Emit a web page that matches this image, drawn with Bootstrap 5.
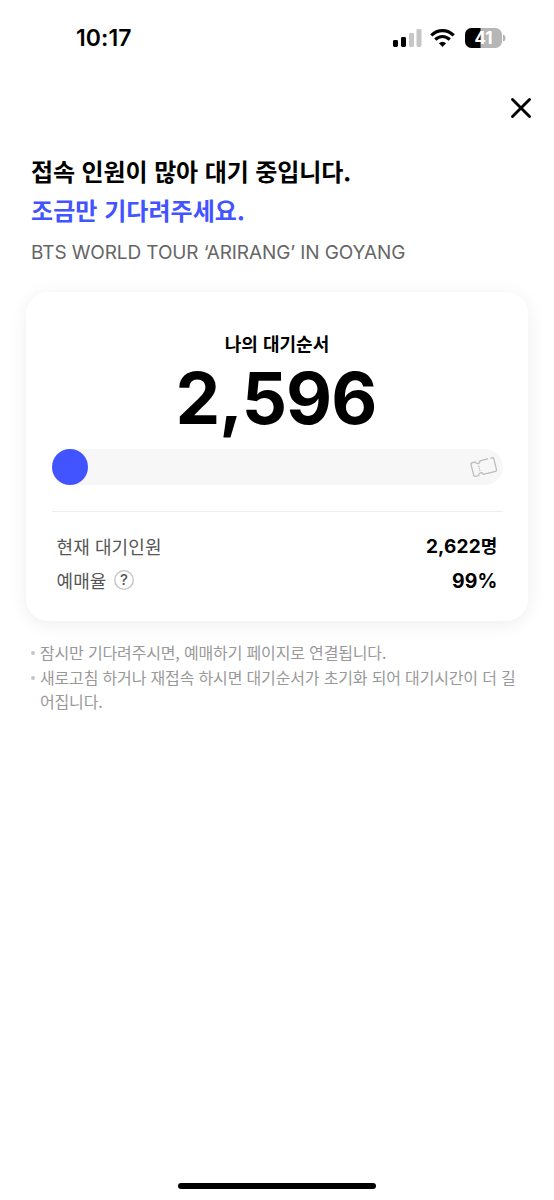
<!DOCTYPE html>
<html lang="ko">
<head>
<meta charset="utf-8">
<meta name="viewport" content="width=device-width, initial-scale=1">
<title>대기 중</title>
<link href="https://cdn.jsdelivr.net/npm/bootstrap@5.3.0/dist/css/bootstrap.min.css" rel="stylesheet">
<style>
body{font-family:Inter,"Noto Sans CJK KR",sans-serif;color:#000;background:#fff;overflow:hidden}
.screen{height:1200px}
.status{height:75px;padding:0 48px 0 76px}
.clock{font-size:23px;font-weight:600;line-height:30px;letter-spacing:.1px}
.topbar{height:66px;padding-right:22px}
.heading{padding:11px 0 0 31px;height:151px;white-space:nowrap}
.heading h1{font-size:24px;line-height:38.5px;font-weight:700;font-family:"Noto Sans CJK KR",sans-serif;letter-spacing:-.1px;margin:0}
.heading .accent{color:#4154ff;letter-spacing:.05px}
.event{font-size:19px;line-height:26px;letter-spacing:-.11px;color:#666;margin-top:11px}
.queue{margin:0 26px;height:329px;border:0;border-radius:22px;padding:0 25.5px;box-shadow:0 3px 18px rgba(0,0,0,.07)}
.queue-label{font:700 18px/26px "Noto Sans CJK KR",sans-serif;margin-top:38px}
.queue-number{font-size:71px;line-height:74px;font-weight:700;letter-spacing:-.9px;margin-top:5px;padding-right:2px}
.track{height:36px;border-radius:18px;background:#f7f7f7;margin-top:14px;padding-right:5px}
.runner{width:36px;height:36px;background:#4154ff}
.stats{border-top:1px solid #eee;margin-top:26px;padding:18px 5px 0}
.stat{height:34px;font-size:19px;line-height:34px}
.stat-name{color:#555;font:400 18px/32px "Noto Sans CJK KR",sans-serif;letter-spacing:.1px;height:32px}
.stat-value{font-weight:700;letter-spacing:.15px}
.stat-value.rate{font-size:19.5px}
.stat-value small{font-size:18px;font-weight:700}
.notes{margin:19px 0 0;padding:0 30px 0 40px;font:400 16px/24.5px "Noto Sans CJK KR",sans-serif;letter-spacing:-.16px;color:#999;white-space:nowrap}
.notes li{position:relative}
.notes li::before{content:"";position:absolute;left:-9px;top:11px;width:4px;height:4px;border-radius:50%;background:#c4c4c4}
.home{width:198px;height:6px;background:#000;margin-bottom:11px}
</style>
</head>
<body>
<main class="screen d-flex flex-column">
  <div class="status d-flex align-items-center justify-content-between">
    <span class="clock">10:17</span>
    <div class="d-flex align-items-center">
      <svg width="29" height="18" viewBox="0 0 29 18"><rect y="11" width="5" height="7" rx="1.4"/><rect x="8" y="8" width="5" height="10" rx="1.4"/><rect x="16" y="4" width="5" height="14" rx="1.4" fill="#c6c6c6"/><rect x="23.5" width="5" height="18" rx="1.4" fill="#c6c6c6"/></svg>
      <svg class="ms-2" style="margin-right:10px" width="25" height="18" viewBox="0 0 25 18"><g fill="none" stroke="#000" stroke-width="3.2"><path d="M1.3 6.4Q6.2 1.6 12.5 1.6T23.7 6.4"/><path d="M5.3 10.6Q8.4 7.5 12.5 7.5T19.7 10.6"/></g><path d="M8.9 14.3Q12.5 11.1 16.1 14.3L12.5 18Z"/></svg>
      <svg width="41" height="20" viewBox="0 0 41 20"><defs><clipPath id="cell"><rect width="37" height="20" rx="6.5"/></clipPath></defs><g clip-path="url(#cell)"><path d="M0 0H37V20H0Z" fill="#b6b6b6"/><path d="M0 0H15.5V20H0Z"/></g><path d="M38 6.5Q40.5 7 40.5 10T38 13.5Z" fill="#b6b6b6"/><text x="18.5" y="16" text-anchor="middle" font-family="Inter,sans-serif" font-size="17" font-weight="700" fill="#fff">41</text></svg>
    </div>
  </div>
  <div class="topbar d-flex align-items-center justify-content-end">
    <svg width="22" height="22" viewBox="0 0 22 22" role="button" aria-label="닫기"><path d="M2.5 2.5L19.5 19.5M19.5 2.5L2.5 19.5" stroke="#000" stroke-width="2.9" stroke-linecap="round"/></svg>
  </div>
  <header class="heading">
    <h1>접속 인원이 많아 대기 중입니다.</h1>
    <h1 class="accent">조금만 기다려주세요.</h1>
    <p class="event mb-0">BTS WORLD TOUR ‘ARIRANG’ IN GOYANG</p>
  </header>
  <section class="card queue">
    <div class="queue-label text-center">나의 대기순서</div>
    <div class="queue-number text-center">2,596</div>
    <div class="track d-flex align-items-center justify-content-between">
      <div class="runner rounded-circle"></div>
      <svg width="28" height="24" viewBox="0 0 28 24" fill="none" stroke="#bdbdbd" stroke-width="1.3" stroke-linecap="round" stroke-linejoin="round"><g transform="rotate(-14 14 12)"><path d="M19.5 5H11.6Q11.2 7.2 9.2 7.2T6.8 5H3.5Q2 5 2 6.5V17.5Q2 19 3.5 19H6.8Q7.2 16.8 9.2 16.8T11.6 19H24Q25.5 19 25.5 17.5V6.5Q25.5 5 24 5H22.8"/><path d="M9.2 9.8V10M9.2 12V12.2M9.2 14.2V14.4"/></g></svg>
    </div>
    <div class="stats">
      <div class="stat d-flex justify-content-between"><span class="stat-name">현재 대기인원</span><span class="stat-value">2,622<small>명</small></span></div>
      <div class="stat d-flex justify-content-between"><span class="stat-name d-flex align-items-center">예매율<svg class="ms-2" width="20" height="20" viewBox="0 0 20 20"><circle cx="10" cy="10" r="9.3" fill="none" stroke="#c2c2c2" stroke-width="1.3"/><text x="10" y="15.4" text-anchor="middle" font-family="Inter,sans-serif" font-size="15" font-weight="500" fill="#555">?</text></svg></span><span class="stat-value rate">99%</span></div>
    </div>
  </section>
  <ul class="notes list-unstyled">
    <li>잠시만 기다려주시면, 예매하기 페이지로 연결됩니다.</li>
    <li>새로고침 하거나 재접속 하시면 대기순서가 초기화 되어 대기시간이 더 길<br>어집니다.</li>
  </ul>
  <div class="home rounded-pill mt-auto mx-auto"></div>
</main>
<script src="https://cdn.jsdelivr.net/npm/bootstrap@5.3.0/dist/js/bootstrap.bundle.min.js"></script>
</body>
</html>
